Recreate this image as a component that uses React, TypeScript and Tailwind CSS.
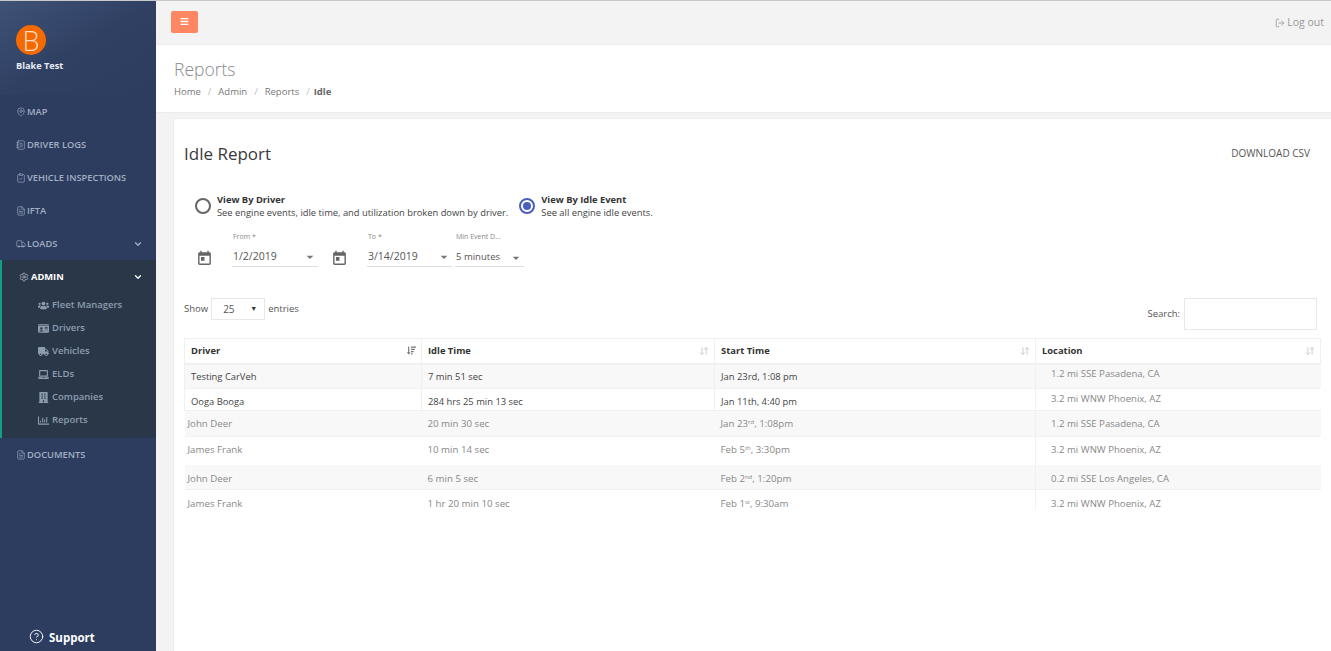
import { ArrowDownUp, ChevronDown, CircleHelp, ClipboardCheck, FileText, LogOut, MapPin, NotebookText, Settings, Truck } from "lucide-react";
import { FaBars, FaBuilding, FaIdCard, FaLaptop, FaRegChartBar, FaSortAmountDown, FaTruck, FaUsers } from "react-icons/fa";
import { MdArrowDropDown, MdToday } from "react-icons/md";

const mainNav = [
  { title: "MAP", icon: MapPin },
  { title: "DRIVER LOGS", icon: NotebookText },
  { title: "VEHICLE INSPECTIONS", icon: ClipboardCheck },
  { title: "IFTA", icon: FileText },
  { title: "LOADS", icon: Truck, caret: true },
];

const adminNav = [
  { title: "Fleet Managers", icon: FaUsers },
  { title: "Drivers", icon: FaIdCard },
  { title: "Vehicles", icon: FaTruck },
  { title: "ELDs", icon: FaLaptop },
  { title: "Companies", icon: FaBuilding },
  { title: "Reports", icon: FaRegChartBar },
];

function SidebarLink({ item }: { item: { title: string; icon: React.ComponentType<{ className?: string }>; caret?: boolean } }) {
  const Icon = item.icon;
  return (
    <div className="flex h-[33px] items-center gap-[1px] pl-[16px] pr-[13px] text-[9.3px] font-semibold text-[#a3aec2]">
      <Icon className="h-[10px] w-[10px] shrink-0 stroke-[1.5]" />
      <span className="whitespace-nowrap">{item.title}</span>
      {item.caret && <ChevronDown className="ml-auto h-[10px] w-[10px] stroke-[3]" />}
    </div>
  );
}

function Sidebar() {
  return (
    <aside className="flex w-[156px] shrink-0 flex-col bg-[#2c3d5f]">
      <div className="h-[94px] bg-gradient-to-br from-[#3f5377] via-[#2f4063] to-[#2c3d5f] pl-[16px] pt-[24px]">
        <div className="flex h-[30px] w-[30px] items-center justify-center rounded-full bg-[#f56a00] text-[27px] font-light leading-none text-[#f7d9c4]">
          B
        </div>
        <div className="mt-[4px] text-[9.2px] font-bold text-[#e8ecf2]">Blake Test</div>
      </div>
      {mainNav.map((item) => (
        <SidebarLink key={item.title} item={item} />
      ))}
      <div className="h-[178px] border-l-2 border-[#12a085] bg-[#2a3748] pt-[2px]">
        <div className="flex h-[29px] items-center gap-[2px] pl-[17px] pr-[13px] text-[9.3px] font-bold text-white">
          <Settings className="h-[10px] w-[10px] stroke-[1.5] text-[#c9d0da]" />
          <span>ADMIN</span>
          <ChevronDown className="ml-auto h-[10px] w-[10px] stroke-[3]" />
        </div>
        <div className="mt-[3px]">
          {adminNav.map(({ title, icon: Icon }) => (
            <div key={title} className="flex h-[23px] items-center gap-[3px] pl-[36px] text-[9.5px] font-semibold text-[#8d9db0]">
              <Icon className="h-[11px] w-[11px] shrink-0" />
              <span>{title}</span>
            </div>
          ))}
        </div>
      </div>
      <SidebarLink item={{ title: "DOCUMENTS", icon: FileText }} />
      <div className="mt-auto flex h-[22px] items-start gap-[5px] pl-[29px] text-[11.5px] font-bold text-white">
        <CircleHelp className="h-[15px] w-[15px] stroke-[1.5]" />
        <span>Support</span>
      </div>
    </aside>
  );
}

function RadioOption({ title, text, checked }: { title: string; text: string; checked?: boolean }) {
  return (
    <div className="flex items-center gap-[6px]">
      <div className={`flex h-[16px] w-[16px] shrink-0 items-center justify-center rounded-full border-2 ${checked ? "border-[#4a5ebd]" : "border-[#666666]"}`}>
        {checked && <div className="h-[8px] w-[8px] rounded-full bg-[#4a5ebd]" />}
      </div>
      <div className="text-[9.35px] leading-[13px] text-[#444444]">
        <div className="font-bold text-[#333333]">{title}</div>
        <div className="whitespace-nowrap">{text}</div>
      </div>
    </div>
  );
}

function SelectField({ label, value, width, small }: { label: string; value: string; width: string; small?: boolean }) {
  return (
    <div className={width}>
      <div className="h-[12px] pl-px text-[7px] leading-[12px] text-[#888888]">{label}</div>
      <div className={`mt-[1px] flex h-[23px] items-center justify-between border-b border-[#dddddd] pl-px text-[#555555] ${small ? "pt-[5px] text-[9.5px]" : "pt-[3px] text-[10.5px]"}`}>
        <span>{value}</span>
        <MdArrowDropDown className="h-[16px] w-[16px] text-[#777777]" />
      </div>
    </div>
  );
}

const rows = [
  { h: "h-[25px]", bg: "bg-[#f8f8f8]", dark: true, pad: "", locPad: "pb-[6px]", driver: "Testing CarVeh", idle: "7 min 51 sec", start: <>Jan 23rd, 1:08 pm</>, loc: "1.2 mi SSE Pasadena, CA" },
  { h: "h-[22px]", bg: "bg-white", dark: true, pad: "pt-[3px]", locPad: "pb-[2px]", driver: "Ooga Booga", idle: "284 hrs 25 min 13 sec", start: <>Jan 11th, 4:40 pm</>, loc: "3.2 mi WNW Phoenix, AZ" },
  { h: "h-[26px]", bg: "bg-[#f8f8f8]", pad: "pb-[1px]", locPad: "pb-[1px]", driver: "John Deer", idle: "20 min 30 sec", start: <>Jan 23<sup className="text-[6px]">rd</sup>, 1:08pm</>, loc: "1.2 mi SSE Pasadena, CA" },
  { h: "h-[28px]", bg: "bg-white", gap: true, pad: "pb-[2px]", locPad: "pb-[2px]", driver: "James Frank", idle: "10 min 14 sec", start: <>Feb 5<sup className="text-[6px]">th</sup>, 3:30pm</>, loc: "3.2 mi WNW Phoenix, AZ" },
  { h: "h-[25px]", bg: "bg-[#f8f8f8]", pad: "pt-[3px]", locPad: "pt-[3px]", driver: "John Deer", idle: "6 min 5 sec", start: <>Feb 2<sup className="text-[6px]">nd</sup>, 1:20pm</>, loc: "0.2 mi SSE Los Angeles, CA" },
  { h: "h-[19px]", bg: "bg-white", pad: "pt-[8px]", locPad: "pt-[8px]", driver: "James Frank", idle: "1 hr 20 min 10 sec", start: <>Feb 1<sup className="text-[6px]">st</sup>, 9:30am</>, loc: "3.2 mi WNW Phoenix, AZ" },
];

function ReportTable() {
  const heads = ["Driver", "Idle Time", "Start Time", "Location"];
  return (
    <table className="w-[1136px] table-fixed border-collapse text-[9.4px] leading-[11px]">
      <colgroup>
        <col className="w-[237px]" />
        <col className="w-[293px]" />
        <col className="w-[321px]" />
        <col className="w-[285px]" />
      </colgroup>
      <thead>
        <tr className="h-[25px] border-y border-b-2 border-[#f0f0f0]">
          {heads.map((head, i) => (
            <th key={head} className="border-x border-[#f0f0f0] pl-[6px] pr-[5px] text-left font-bold text-[#333333]">
              <div className="flex items-center justify-between">
                <span>{head}</span>
                {i === 0 ? (
                  <FaSortAmountDown className="h-[9px] w-[9px] text-[#777777]" />
                ) : (
                  <ArrowDownUp className="h-[10px] w-[10px] text-[#c4c4c4]" />
                )}
              </div>
            </th>
          ))}
        </tr>
      </thead>
      <tbody>
        {rows.map((row, i) => {
          const cellBorder = row.dark ? "border-x border-[#f0f0f0]" : "";
          const rowBorder = i === rows.length - 1 || row.gap ? "" : "border-b border-[#f0f0f0]";
          return (
            <tr key={i} className={`${row.h} ${row.bg} ${rowBorder} ${row.dark ? "text-[#444444]" : "text-[#888888]"}`}>
              <td className={`${cellBorder} p-0 ${row.pad} ${row.dark ? "pl-[6px]" : "pl-[3px] text-[9.7px]"}`}>{row.driver}</td>
              <td className={`${cellBorder} p-0 ${row.pad} pl-[6px] ${row.dark ? "" : "text-[9.7px]"}`}>{row.idle}</td>
              <td className={`${cellBorder} p-0 ${row.pad} pl-[6px] ${row.dark ? "" : "text-[9.7px]"}`}>{row.start}</td>
              <td className={`border-l border-[#f0f0f0] p-0 pl-[15px] text-[9.6px] text-[#888888] ${row.locPad}`}>{row.loc}</td>
            </tr>
          );
        })}
      </tbody>
    </table>
  );
}

export default function App() {
  return (
    <div className="flex h-screen overflow-hidden border-t border-[#c9c9c9] bg-white font-['Open_Sans',sans-serif]">
      <Sidebar />
      <div className="flex min-w-0 flex-1 flex-col">
        <header className="flex h-[44px] shrink-0 items-center justify-between border-b border-[#ececec] bg-[#f3f3f4] pl-[15px] pr-[7px]">
          <div className="mb-[2px] flex h-[22px] w-[27px] items-center justify-center rounded-[2px] bg-[#fc8762]">
            <FaBars className="h-[9px] w-[9px] text-white" />
          </div>
          <div className="mt-[1px] flex items-center gap-[2px] text-[10.5px] text-[#999999]">
            <LogOut className="h-[10px] w-[10px]" />
            <span>Log out</span>
          </div>
        </header>
        <div className="h-[68px] shrink-0 border-b border-[#ececec] pl-[18px] pt-[11px]">
          <h1 className="text-[17.5px] font-light leading-[26px] text-[#8a8a8a]">Reports</h1>
          <div className="mt-[3px] flex items-center gap-[7px] text-[9.5px] text-[#777777]">
            <span>Home</span>
            <span className="text-[#bbbbbb]">/</span>
            <span>Admin</span>
            <span className="text-[#bbbbbb]">/</span>
            <span>Reports</span>
            <span className="text-[#bbbbbb]">/</span>
            <span className="-ml-[3px] font-bold text-[#666666]">Idle</span>
          </div>
        </div>
        <div className="min-h-0 flex-1 bg-[#f3f3f4] pl-[17px] pt-[5px]">
          <main className="h-full rounded-tl-[2px] border-l border-t border-[#ececec] bg-white pl-[10px] pr-[11px]">
            <div className="flex h-[69px] items-center justify-between pr-[10px]">
              <h2 className="text-[17px] text-[#3a3a3a]">Idle Report</h2>
              <span className="text-[10px] text-[#555555]">DOWNLOAD CSV</span>
            </div>
            <div className="ml-[11px] mt-[5px] flex gap-[11px]">
              <RadioOption title="View By Driver" text="See engine events, idle time, and utilization broken down by driver." />
              <RadioOption title="View By Idle Event" text="See all engine idle events." checked />
            </div>
            <div className="ml-[12px] mt-[12px] flex items-end">
              <MdToday className="mr-[19px] h-[17px] w-[17px] text-[#666666]" />
              <SelectField label="From *" value="1/2/2019" width="w-[86px]" />
              <MdToday className="ml-[13px] mr-[19px] h-[17px] w-[17px] text-[#666666]" />
              <SelectField label="To *" value="3/14/2019" width="w-[85px]" />
              <div className="w-[3px]" />
              <SelectField label="Min Event D..." value="5 minutes" width="w-[69px]" small />
            </div>
            <div className="mt-[31px] flex items-start justify-between pr-[3px] text-[9.5px] text-[#555555]">
              <div className="flex items-center gap-[3px]">
                <span>Show</span>
                <div className="flex h-[22px] w-[54px] items-center justify-between border border-[#e8e8e8] pl-[11px] pr-[7px] text-[10px]">
                  <span>25</span>
                  <span className="text-[7px] text-[#333333]">▼</span>
                </div>
                <span>entries</span>
              </div>
              <div className="flex items-center gap-[4px]">
                <span>Search:</span>
                <div className="h-[32px] w-[133px] border border-[#e8e8e8]" />
              </div>
            </div>
            <div className="mt-[8px]">
              <ReportTable />
            </div>
          </main>
        </div>
      </div>
    </div>
  );
}
